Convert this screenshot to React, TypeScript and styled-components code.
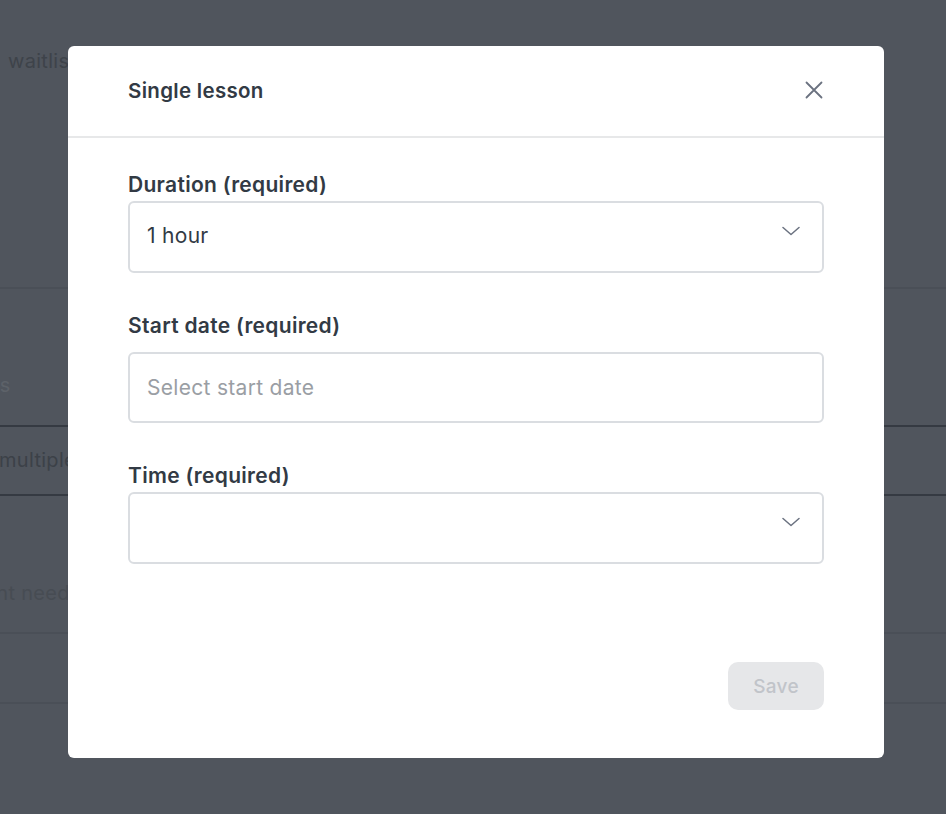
import React from "react"
import styled, { createGlobalStyle } from "styled-components"

const GlobalStyle = createGlobalStyle`
  html, body {
    margin: 0;
    padding: 0;
    height: 100%;
    overflow: hidden;
  }
  body {
    font-family: Inter, "Noto Sans", "Liberation Sans", sans-serif;
    background: #50555d;
  }
`

const ChevronDown = () => (
  <svg width="18" height="10" viewBox="0 0 18 10" fill="none">
    <path d="M1 1.5L9 8.5L17 1.5" stroke="#6b7280" strokeWidth="1.5" strokeLinecap="round" strokeLinejoin="round" />
  </svg>
)

const CloseIcon = () => (
  <svg width="18" height="18" viewBox="0 0 18 18" fill="none">
    <path d="M1.5 1.5L16.5 16.5M16.5 1.5L1.5 16.5" stroke="#6b7280" strokeWidth="1.8" strokeLinecap="round" />
  </svg>
)

const App: React.FC = () => {
  return (
    <>
      <GlobalStyle />
      <S.Page>
        <S.Behind>
          <S.BgText $top={49} $shift={8} $color="#3e434a">waitlist</S.BgText>
          <S.BgRule $top={214} $tone="soft" />
          <S.BgText $top={84} $shift={-70} $color="#5d6269">Lessons</S.BgText>
          <S.BgRule $top={28} $tone="strong" />
          <S.BgText $top={21} $shift={-1} $color="#3c4148">multiple</S.BgText>
          <S.BgRule $top={22} $tone="strong" />
          <S.BgText $top={85} $shift={-58} $color="#474c53">student needs</S.BgText>
          <S.BgRule $top={27} $tone="soft" />
          <S.BgRule $top={68} $tone="soft" />
        </S.Behind>

        <S.Overlay>
          <S.Modal>
            <S.Header>
              <S.Title>Single lesson</S.Title>
              <S.CloseButton aria-label="Close">
                <CloseIcon />
              </S.CloseButton>
            </S.Header>
            <S.Body>
              <S.Field>
                <S.Label>Duration (required)</S.Label>
                <S.Select>
                  <S.Value>1 hour</S.Value>
                  <ChevronDown />
                </S.Select>
              </S.Field>
              <S.Field>
                <S.Label>Start date (required)</S.Label>
                <S.Input $offset={10}>
                  <S.Placeholder>Select start date</S.Placeholder>
                </S.Input>
              </S.Field>
              <S.Field>
                <S.Label>Time (required)</S.Label>
                <S.Select>
                  <S.Value />
                  <ChevronDown />
                </S.Select>
              </S.Field>
            </S.Body>
            <S.Footer>
              <S.SaveButton disabled>Save</S.SaveButton>
            </S.Footer>
          </S.Modal>
        </S.Overlay>
      </S.Page>
    </>
  )
}

const S = {
  Page: styled.div`
    position: relative;
    width: 100vw;
    height: 100vh;
    background: #50555d;
    overflow: hidden;
  `,
  Behind: styled.div`
    display: flex;
    flex-direction: column;
    width: 100%;
  `,
  BgText: styled.div<{ $top: number; $shift: number; $color: string }>`
    margin-top: ${(p) => p.$top}px;
    margin-left: ${(p) => p.$shift}px;
    font-size: 20px;
    line-height: 24px;
    letter-spacing: 0.3px;
    color: ${(p) => p.$color};
    white-space: nowrap;
  `,
  BgRule: styled.div<{ $top: number; $tone: "soft" | "strong" }>`
    margin-top: ${(p) => p.$top}px;
    height: 2px;
    width: 100%;
    background: ${(p) => (p.$tone === "strong" ? "#353a42" : "#4a4f57")};
  `,
  Overlay: styled.div`
    position: absolute;
    inset: 0;
    padding: 46px 0 0 68px;
  `,
  Modal: styled.div`
    width: 816px;
    height: 712px;
    background: #ffffff;
    border-radius: 6px;
    display: flex;
    flex-direction: column;
    overflow: hidden;
  `,
  Header: styled.div`
    height: 90px;
    padding: 0 60px;
    display: flex;
    align-items: center;
    justify-content: space-between;
    border-bottom: 2px solid #e7e8e9;
    flex-shrink: 0;
  `,
  Title: styled.h2`
    margin: 0;
    font-size: 20.5px;
    font-weight: 600;
    line-height: 24px;
    letter-spacing: 0.3px;
    color: #323a44;
  `,
  CloseButton: styled.button`
    border: 0;
    background: none;
    padding: 0;
    margin-right: 1px;
    margin-top: -2px;
    width: 18px;
    height: 18px;
    display: flex;
    cursor: pointer;
  `,
  Body: styled.div`
    flex: 1;
    padding: 35px 60px 0;
    display: flex;
    flex-direction: column;
    gap: 41px;
  `,
  Field: styled.div`
    display: flex;
    flex-direction: column;
  `,
  Label: styled.label`
    font-size: 21px;
    font-weight: 600;
    line-height: 24px;
    letter-spacing: 0.3px;
    color: #323a44;
    margin-bottom: 4px;
  `,
  Select: styled.div`
    height: 72px;
    box-sizing: border-box;
    border: 2px solid #dadde1;
    border-radius: 6px;
    padding: 0 22px 0 17px;
    display: flex;
    align-items: center;
    justify-content: space-between;
    flex-shrink: 0;
    svg {
      margin-top: -12px;
    }
  `,
  Input: styled.div<{ $offset: number }>`
    margin-top: ${(p) => p.$offset}px;
    height: 71px;
    box-sizing: border-box;
    border: 2px solid #dadde1;
    border-radius: 6px;
    padding: 0 17px;
    display: flex;
    align-items: center;
    flex-shrink: 0;
  `,
  Value: styled.span`
    font-size: 21px;
    line-height: 24px;
    letter-spacing: 0.3px;
    color: #323a44;
    margin-top: -3px;
  `,
  Placeholder: styled.span`
    font-size: 21px;
    line-height: 24px;
    letter-spacing: 0.3px;
    color: #9a9ea4;
  `,
  Footer: styled.div`
    padding: 0 60px 48px;
    display: flex;
    justify-content: flex-end;
  `,
  SaveButton: styled.button`
    width: 96px;
    height: 48px;
    border: 0;
    border-radius: 10px;
    background: #e6e7e9;
    color: #c1c4c9;
    font-family: inherit;
    font-size: 19px;
    font-weight: 500;
    letter-spacing: 0.3px;
    cursor: not-allowed;
  `,
}

export default App
